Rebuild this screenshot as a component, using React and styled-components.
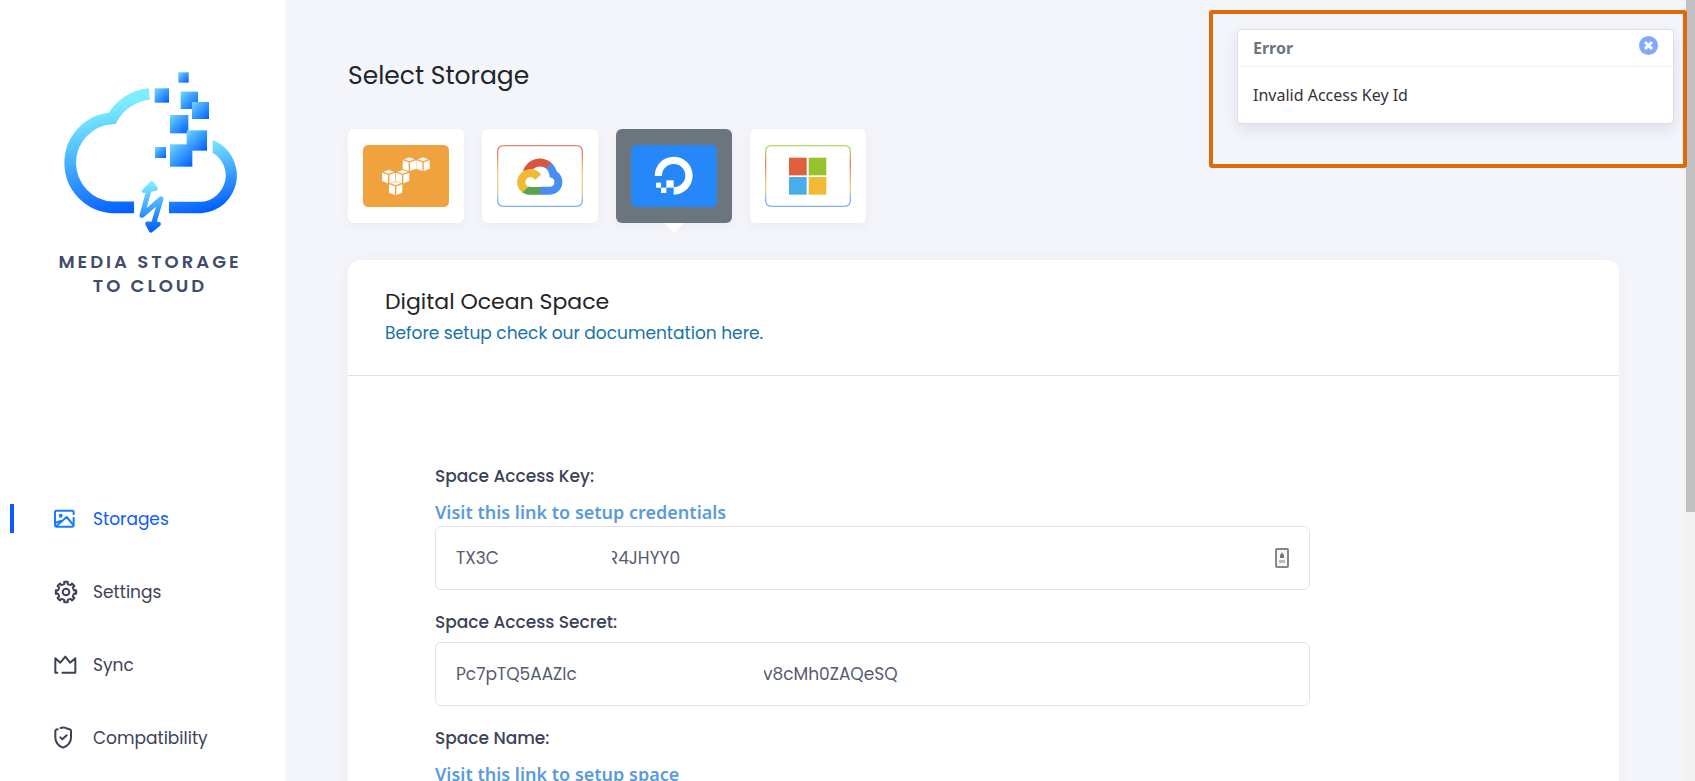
import { useState } from 'react';
import styled, { createGlobalStyle } from 'styled-components';

const GlobalStyle = createGlobalStyle`
  * {
    box-sizing: border-box;
  }

  body {
    margin: 0;
    background: #f4f5fa;
    font-family: Poppins, Inter, sans-serif;
    color: #212529;
  }
`;

const Page = styled.div`
  display: flex;
  height: 100vh;
  overflow: hidden;
`;

const Sidebar = styled.aside`
  flex: 0 0 285px;
  background: #fff;
`;

const Brand = styled.div`
  display: flex;
  flex-direction: column;
  align-items: center;
  padding: 70px 0 0 15px;
  height: 482px;
`;

const BrandName = styled.div`
  margin-top: 15px;
  font-size: 18px;
  font-weight: 600;
  line-height: 24px;
  letter-spacing: 3px;
  text-align: center;
  color: #414c6b;
`;

const NavLink = styled.a`
  display: flex;
  align-items: center;
  height: 73px;
  padding-left: 10px;
  font-size: 17px;
  text-decoration: none;
  color: ${({ $active }) => ($active ? '#0d5bff' : '#3c4257')};

  &::before {
    content: '';
    width: 4px;
    height: 29px;
    background: ${({ $active }) => ($active ? '#0d5bff' : 'transparent')};
  }

  svg {
    margin: 0 15px 0 40px;
  }
`;

const Main = styled.main`
  flex: 1;
  min-width: 0;
  padding: 58px 65px 0 63px;
`;

const PageTitle = styled.h1`
  margin: 0;
  font-size: 25px;
  font-weight: 400;
  line-height: 36px;
`;

const StorageList = styled.div`
  display: flex;
  gap: 18px;
  margin: 35px 0 37px;
`;

const StorageButton = styled.button`
  position: relative;
  display: flex;
  align-items: center;
  justify-content: center;
  width: 116px;
  height: 94px;
  padding: 0;
  border: 0;
  border-radius: 6px;
  background: ${({ $active }) => ($active ? '#6c757d' : '#fff')};
  box-shadow: 0 4px 12px rgba(60, 70, 110, 0.05);
  cursor: pointer;

  &::after {
    content: '';
    display: ${({ $active }) => ($active ? 'block' : 'none')};
    position: absolute;
    top: 100%;
    left: 48px;
    border: 10px solid transparent;
    border-top-color: #fff;
    border-bottom: 0;
  }
`;

const Card = styled.section`
  min-height: 700px;
  border-radius: 12px;
  background: #fff;
  box-shadow: 0 0 14px rgba(60, 70, 110, 0.04);
`;

const CardHeader = styled.header`
  padding: 25px 37px 28px;
  border-bottom: 1px solid #e1e2ea;
`;

const CardTitle = styled.h2`
  margin: 0 0 1px;
  font-size: 22px;
  font-weight: 400;
  line-height: 33px;
`;

const DocLink = styled.a`
  display: block;
  font-size: 17px;
  line-height: 28px;
  text-decoration: none;
  color: #1672ab;
`;

const Form = styled.form`
  padding: 86px 90px 0 87px;
`;

const Field = styled.div`
  width: 80%;
  margin-bottom: 18px;
`;

const Label = styled.label`
  display: block;
  margin-bottom: 6px;
  font-size: 17px;
  font-weight: 500;
  line-height: 28px;
  color: #3c4257;
`;

const HelpLink = styled.a`
  display: block;
  padding-top: 2px;
  font-family: 'Segoe UI', 'Noto Sans', sans-serif;
  font-size: 18px;
  font-weight: 600;
  line-height: 28px;
  text-decoration: none;
  color: #5b9bdb;
`;

const InputWrap = styled.div`
  position: relative;
`;

const Input = styled.input`
  display: block;
  width: 100%;
  height: 64px;
  padding: 0 20px;
  border: 1px solid #e1e2ee;
  border-radius: 6px;
  font-family: inherit;
  font-size: 17px;
  color: #565b70;
  outline: 0;
`;

// Hides the middle of a stored credential
const Redaction = styled.span`
  position: absolute;
  top: 16px;
  bottom: 16px;
  left: ${({ $from }) => $from}px;
  width: ${({ $to, $from }) => $to - $from}px;
  background: #fff;
`;

const FillIcon = styled.svg`
  position: absolute;
  top: 22px;
  right: 20px;
`;

const Scrollbar = styled.div`
  flex: 0 0 11px;
  padding-left: 2px;
  background: #f1f1f1;
`;

const ScrollThumb = styled.div`
  height: 512px;
  background: #c1c1c1;
`;

const ToastFrame = styled.div`
  position: absolute;
  top: 10px;
  right: 8px;
  width: 478px;
  height: 158px;
  padding: 15px 9px 0 24px;
  border: 4px solid #dd6b0d;
  border-radius: 3px;
`;

const Toast = styled.div`
  border: 1px solid #dfe0e5;
  border-radius: 5px;
  background: #fff;
  box-shadow: 0 6px 16px rgba(0, 0, 0, 0.09);
  font-family: 'Segoe UI', 'Noto Sans', sans-serif;
  font-size: 16px;
`;

const ToastHeader = styled.div`
  display: flex;
  align-items: center;
  justify-content: space-between;
  height: 37px;
  padding: 0 15px;
  border-bottom: 1px solid #f0f0f2;
  font-weight: 700;
  color: #6c757d;
`;

const ToastBody = styled.div`
  padding: 16px 15px;
  line-height: 24px;
  color: #30343c;
`;

const CloseButton = styled.button`
  display: flex;
  margin-bottom: 6px;
  padding: 0;
  border: 0;
  background: none;
  cursor: pointer;
`;

function BrandLogo() {
  const squares = [
    [415, 67, 31],
    [344, 115, 43],
    [422, 125, 52],
    [456, 156, 51],
    [390, 195, 55],
    [440, 241, 61],
    [390, 283, 67],
    [345, 291, 33],
  ];
  return (
    <svg width="180" height="165" viewBox="60 60 540 495" fill="none">
      <defs>
        <linearGradient id="square" x1="0" y1="0" x2="1" y2="1">
          <stop offset="0" stopColor="#6fd8ff" />
          <stop offset="1" stopColor="#005cff" />
        </linearGradient>
        <linearGradient id="left" gradientUnits="userSpaceOnUse" x1="190" y1="170" x2="270" y2="490">
          <stop offset="0" stopColor="#7eeeff" />
          <stop offset="1" stopColor="#005cff" />
        </linearGradient>
        <linearGradient id="right" gradientUnits="userSpaceOnUse" x1="480" y1="270" x2="530" y2="480">
          <stop offset="0" stopColor="#7eeeff" />
          <stop offset="1" stopColor="#005cff" />
        </linearGradient>
        <linearGradient id="bolt" gradientUnits="userSpaceOnUse" x1="325" y1="400" x2="340" y2="545">
          <stop offset="0" stopColor="#7eeeff" />
          <stop offset="1" stopColor="#005cff" />
        </linearGradient>
      </defs>
      <path
        d="M328 132A145 145 0 0 0 216 205A133.7 133.7 0 0 0 218 472H282"
        stroke="url(#left)"
        strokeWidth="35"
      />
      <path
        d="M387 490H484A114 114 0 0 0 518 270V308A79 79 0 0 1 484 455H387Z"
        fill="url(#right)"
      />
      {squares.map(([x, y, size]) => (
        <rect key={`${x}-${y}`} x={x} y={y} width={size} height={size} fill="url(#square)" />
      ))}
      <g stroke="url(#bolt)" fill="url(#bolt)" strokeLinejoin="round" strokeLinecap="round">
        <path d="M327 420L306 496L363 447L338 530" strokeWidth="15" fill="none" />
        <path d="M335 400L312 423L347 416Z" strokeWidth="13" />
        <path d="M322 521L356 522L333 541Z" strokeWidth="13" />
      </g>
    </svg>
  );
}

function AmazonLogo() {
  const cubes = [
    [139, 58],
    [180, 58],
    [77, 95],
    [119, 95],
    [98, 130],
  ];
  return (
    <svg width="86" height="62" viewBox="0 0 258 186">
      <rect width="258" height="186" rx="16" fill="#f0a23f" />
      {cubes.map(([x, y]) => (
        <g key={`${x}-${y}`} transform={`translate(${x} ${y})`} fill="#fff">
          <path d="M-20-12L-2-6V20L-20 13Z" />
          <path d="M20-12L2-6V20L20 13Z" />
          <path d="M0-21L16-15L0-9L-16-15Z" opacity="0.9" />
        </g>
      ))}
    </svg>
  );
}

function GoogleLogo() {
  return (
    <svg width="86" height="62" viewBox="0 0 258 186">
      <defs>
        <linearGradient id="googleFrame" x1="0" y1="0" x2="0" y2="1">
          <stop offset="0.1" stopColor="#e58271" />
          <stop offset="0.5" stopColor="#f7d37c" />
          <stop offset="0.8" stopColor="#c2d3ae" />
          <stop offset="0.9" stopColor="#7fb0f5" />
        </linearGradient>
      </defs>
      <rect x="2" y="2" width="254" height="182" rx="16" fill="none" stroke="url(#googleFrame)" strokeWidth="4" />
      <g transform="translate(54 24) scale(1.16)">
        <path
          fill="#d95643"
          d="M80.6 40.3h.4l-.2-.2 14-14v-.3c-11.8-10.4-28.1-14-43.2-9.5C36.5 20.8 24.9 32.8 20.7 48c.2-.1.5-.2.8-.2 5.2-3.4 11.4-5.4 17.9-5.4 2.2 0 4.3.2 6.4.6.1-.1.2-.1.3-.1 9-9.9 24.2-11.1 34.6-2.6h-.1z"
        />
        <path
          fill="#4a8df0"
          d="M108.1 47.8c-2.3-8.5-7.1-16.2-13.8-22.1L80 39.9c6 4.9 9.5 12.3 9.3 20v2.5c16.9 0 16.9 25.2 0 25.2H63.9v20h-.1l.1.2h25.4c14.6.1 27.5-9.3 31.8-23.1 4.3-13.8-1-28.8-13-36.9z"
        />
        <path
          fill="#5ba354"
          d="M39 107.9h26.3V87.7H39c-1.9 0-3.7-.4-5.4-1.1l-15.2 14.6v.2c6 4.3 13.2 6.6 20.7 6.6z"
        />
        <path
          fill="#f1ba33"
          d="M40.2 41.9c-14.9.1-28.1 9.3-32.9 22.8-4.8 13.6 0 28.5 11.8 37.3l15.6-14.9c-8.6-3.7-10.6-14.5-4-20.8 6.6-6.4 17.8-4.4 21.7 3.8L68 55.2C61.4 46.9 51.1 42 40.2 42.1z"
        />
      </g>
    </svg>
  );
}

function DigitalOceanLogo() {
  return (
    <svg width="86" height="62" viewBox="0 0 258 186">
      <rect width="258" height="186" rx="16" fill="#2688f8" />
      <g fill="#fff">
        <path d="M71 93A57 57 0 1 1 128 149V127A35 35 0 1 0 93 93Z" />
        <rect x="106" y="106" width="22" height="22" />
        <rect x="90" y="128" width="16" height="16" />
        <rect x="75" y="113" width="15" height="15" />
      </g>
    </svg>
  );
}

function MicrosoftLogo() {
  return (
    <svg width="86" height="62" viewBox="0 0 258 186">
      <defs>
        <linearGradient id="microsoftFrame" x1="0" y1="0" x2="0" y2="1">
          <stop offset="0.05" stopColor="#b4d765" />
          <stop offset="0.3" stopColor="#e58271" />
          <stop offset="0.7" stopColor="#f7d37c" />
          <stop offset="0.9" stopColor="#7fb0f5" />
        </linearGradient>
      </defs>
      <rect x="2" y="2" width="254" height="182" rx="16" fill="none" stroke="url(#microsoftFrame)" strokeWidth="4" />
      <rect x="72" y="38" width="53" height="53" fill="#de5f39" />
      <rect x="131" y="38" width="53" height="53" fill="#96c22e" />
      <rect x="72" y="96" width="53" height="53" fill="#48adea" />
      <rect x="131" y="96" width="53" height="53" fill="#f2ba34" />
    </svg>
  );
}

const iconProps = {
  width: 24,
  height: 24,
  viewBox: '0 0 72 72',
  fill: 'none',
  stroke: 'currentColor',
  strokeWidth: 6,
  strokeLinecap: 'round',
  strokeLinejoin: 'round',
};

function ImageIcon() {
  return (
    <svg {...iconProps} stroke="#1a7bff">
      <path d="M3 55V15Q3 11 7 11H55Q59 11 59 15V22M59 32V55Q59 59 55 59H7Q3 59 3 55" />
      <circle cx="20" cy="26" r="4" fill="#1a7bff" strokeWidth="4" />
      <path d="M8 56L38 30L58 54M6 47L22 41" />
    </svg>
  );
}

// Eight rounded teeth around the hub
function gearPath() {
  const points = [];
  for (let i = 0; i < 8; i += 1) {
    [[-18, 24], [-11, 25], [-10, 31], [10, 31], [11, 25], [18, 24]].forEach(([offset, radius]) => {
      const angle = ((i * 45 + offset) * Math.PI) / 180;
      points.push(
        `${(36 + radius * Math.sin(angle)).toFixed(1)} ${(36 - radius * Math.cos(angle)).toFixed(1)}`
      );
    });
  }
  return `M${points.join('L')}Z`;
}

function GearIcon() {
  return (
    <svg {...iconProps}>
      <path d={gearPath()} />
      <circle cx="36" cy="36" r="10" />
    </svg>
  );
}

function CrownIcon() {
  return (
    <svg {...iconProps}>
      <path d="M10 59H4V16L19 29L34 11L48 29L64 16V59H25" />
    </svg>
  );
}

function ShieldIcon() {
  return (
    <svg {...iconProps}>
      <path d="M11 10Q4 11 4 15V34C4 52 13 60 27 65C41 60 51 52 51 34V15Q51 10 43 9L32 5Q27 3 20 6" />
      <path d="M19 34L25 40L38 28" />
    </svg>
  );
}

const navItems = [
  { label: 'Storages', Icon: ImageIcon },
  { label: 'Settings', Icon: GearIcon },
  { label: 'Sync', Icon: CrownIcon },
  { label: 'Compatibility', Icon: ShieldIcon },
];

const storages = [
  { name: 'Amazon S3', Logo: AmazonLogo },
  { name: 'Google Cloud', Logo: GoogleLogo },
  { name: 'Digital Ocean', Logo: DigitalOceanLogo },
  { name: 'Microsoft', Logo: MicrosoftLogo },
];

const gap = (count) => '\u00a0'.repeat(count);

function App() {
  const [storage, setStorage] = useState('Digital Ocean');
  const [accessKey, setAccessKey] = useState(`TX3C${gap(24)}R4JHYY0`);
  const [secret, setSecret] = useState(`Pc7pTQ5AAZIc${gap(41)}v8cMh0ZAQeSQ`);
  const [spaceName, setSpaceName] = useState('');
  const [showError, setShowError] = useState(true);

  return (
    <Page>
      <GlobalStyle />
      <Sidebar>
        <Brand>
          <BrandLogo />
          <BrandName>
            MEDIA STORAGE
            <br />
            TO CLOUD
          </BrandName>
        </Brand>
        <nav>
          {navItems.map(({ label, Icon }, index) => (
            <NavLink key={label} href={`#${label.toLowerCase()}`} $active={index === 0}>
              <Icon />
              {label}
            </NavLink>
          ))}
        </nav>
      </Sidebar>

      <Main>
        <PageTitle>Select Storage</PageTitle>
        <StorageList>
          {storages.map(({ name, Logo }) => (
            <StorageButton
              key={name}
              type="button"
              aria-label={name}
              $active={storage === name}
              onClick={() => setStorage(name)}
            >
              <Logo />
            </StorageButton>
          ))}
        </StorageList>

        <Card>
          <CardHeader>
            <CardTitle>Digital Ocean Space</CardTitle>
            <DocLink href="#docs">Before setup check our documentation here.</DocLink>
          </CardHeader>
          <Form>
            <Field>
              <Label htmlFor="access-key">Space Access Key:</Label>
              <HelpLink href="#credentials">Visit this link to setup credentials</HelpLink>
              <InputWrap>
                <Input id="access-key" value={accessKey} onChange={(e) => setAccessKey(e.target.value)} />
                <Redaction $from={70} $to={177} />
                <FillIcon width="16" height="20" viewBox="0 0 16 20">
                  <rect x="2" y="1" width="12" height="18" rx="1" fill="#f6f6f7" stroke="#85878d" strokeWidth="2" />
                  <path d="M8 4L9 6L10 7V10H6V7L7 6Z" fill="#6f7682" />
                  <path d="M5 12H11V15H5Z" fill="#b9bbc0" />
                </FillIcon>
              </InputWrap>
            </Field>
            <Field>
              <Label htmlFor="access-secret">Space Access Secret:</Label>
              <InputWrap>
                <Input id="access-secret" value={secret} onChange={(e) => setSecret(e.target.value)} />
                <Redaction $from={142} $to={329} />
              </InputWrap>
            </Field>
            <Field>
              <Label htmlFor="space-name">Space Name:</Label>
              <HelpLink href="#space">Visit this link to setup space</HelpLink>
              <Input id="space-name" value={spaceName} onChange={(e) => setSpaceName(e.target.value)} />
            </Field>
          </Form>
        </Card>
      </Main>

      <Scrollbar>
        <ScrollThumb />
      </Scrollbar>

      {showError && (
        <ToastFrame>
          <Toast role="alert">
            <ToastHeader>
              Error
              <CloseButton type="button" aria-label="Close" onClick={() => setShowError(false)}>
                <svg width="19" height="19" viewBox="0 0 19 19">
                  <circle cx="9.5" cy="9.5" r="9.5" fill="#82a9ff" />
                  <path d="M6 6L13 13M13 6L6 13" stroke="#fff" strokeWidth="3" />
                </svg>
              </CloseButton>
            </ToastHeader>
            <ToastBody>Invalid Access Key Id</ToastBody>
          </Toast>
        </ToastFrame>
      )}
    </Page>
  );
}

export default App;
